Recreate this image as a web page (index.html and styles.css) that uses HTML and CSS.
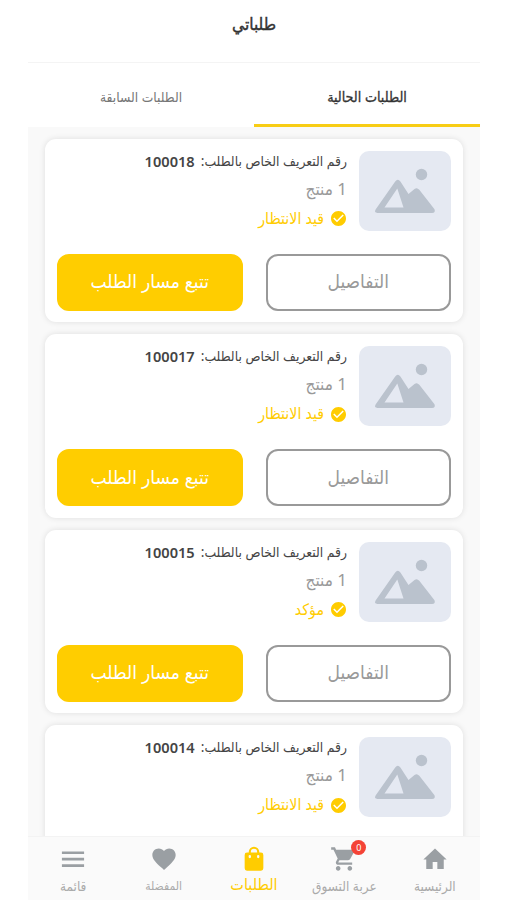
FILE: index.html
```html
<!DOCTYPE html>
<html lang="ar" dir="rtl">
<head>
  <meta charset="UTF-8" />
  <meta name="viewport" content="width=device-width, initial-scale=1.0">
  <title>طلباتي</title>
  <link rel="stylesheet" href="styles.css">
</head>
<body>
  <!-- Shared icons -->
  <svg class="icon-defs" width="0" height="0">
    <symbol id="icon-image" viewBox="0 0 92 80">
      <circle cx="62.5" cy="23.5" r="5.7" />
      <path fill-rule="evenodd" d="M16.6 58.6 36.2 30.5Q38.8 27 41.4 30.5L49.5 43 55.5 38Q58 36 60.3 38.7L75.5 58.3Q76.8 61.8 73 62H18.5Q14.8 61.8 16.600 58.600ZM25.500 56.500H44.500L38.300 37.500Z" />
    </symbol>
    <symbol id="icon-check" viewBox="2 2 20 20">
      <path d="M12 2C6.48 2 2 6.48 2 12s4.48 10 10 10 10-4.48 10-10S17.52 2 12 2zm-2 15-5-5 1.41-1.41L10 14.17l7.59-7.59L19 8l-9 9z" />
    </symbol>
  </svg>

  <div class="app">
    <header class="header">
      <h1 class="page-title">طلباتي</h1>
    </header>

    <!-- Tabs -->
    <div class="tabs">
      <div class="tab active">الطلبات الحالية</div>
      <div class="tab">الطلبات السابقة</div>
    </div>

    <!-- Orders -->
    <main class="orders">
      <div class="order-card">
        <div class="order-info">
          <div class="thumb"><svg><use href="#icon-image" /></svg></div>
          <div class="order-text">
            <div class="order-id"><span class="id-label">رقم التعريف الخاص بالطلب:</span><b>100018</b></div>
            <div class="order-count"><span class="num">1</span> منتج</div>
            <div class="order-status"><svg><use href="#icon-check" /></svg><span>قيد الانتظار</span></div>
          </div>
        </div>
        <div class="order-actions">
          <button class="btn btn-details">التفاصيل</button>
          <button class="btn btn-track">تتبع مسار الطلب</button>
        </div>
      </div>

      <div class="order-card">
        <div class="order-info">
          <div class="thumb"><svg><use href="#icon-image" /></svg></div>
          <div class="order-text">
            <div class="order-id"><span class="id-label">رقم التعريف الخاص بالطلب:</span><b>100017</b></div>
            <div class="order-count"><span class="num">1</span> منتج</div>
            <div class="order-status"><svg><use href="#icon-check" /></svg><span>قيد الانتظار</span></div>
          </div>
        </div>
        <div class="order-actions">
          <button class="btn btn-details">التفاصيل</button>
          <button class="btn btn-track">تتبع مسار الطلب</button>
        </div>
      </div>

      <div class="order-card">
        <div class="order-info">
          <div class="thumb"><svg><use href="#icon-image" /></svg></div>
          <div class="order-text">
            <div class="order-id"><span class="id-label">رقم التعريف الخاص بالطلب:</span><b>100015</b></div>
            <div class="order-count"><span class="num">1</span> منتج</div>
            <div class="order-status"><svg><use href="#icon-check" /></svg><span>مؤكد</span></div>
          </div>
        </div>
        <div class="order-actions">
          <button class="btn btn-details">التفاصيل</button>
          <button class="btn btn-track">تتبع مسار الطلب</button>
        </div>
      </div>

      <div class="order-card">
        <div class="order-info">
          <div class="thumb"><svg><use href="#icon-image" /></svg></div>
          <div class="order-text">
            <div class="order-id"><span class="id-label">رقم التعريف الخاص بالطلب:</span><b>100014</b></div>
            <div class="order-count"><span class="num">1</span> منتج</div>
            <div class="order-status"><svg><use href="#icon-check" /></svg><span>قيد الانتظار</span></div>
          </div>
        </div>
      </div>
    </main>

    <!-- Bottom navigation -->
    <nav class="bottom-nav">
      <a class="nav-item">
        <span class="nav-icon"><svg viewBox="0 0 24 24"><path d="M10 20.500v-6h4v6h5.500v-8H22L12 3 2 12.500h2.500v8z" /></svg></span>
        <span class="nav-label">الرئيسية</span>
      </a>
      <a class="nav-item">
        <span class="nav-icon">
          <svg viewBox="0 0 24 24"><path d="M7 18c-1.1 0-1.99.9-1.99 2S5.9 22 7 22s2-.9 2-2-.9-2-2-2zM1 2v2h2l3.6 7.59-1.35 2.45c-.16.28-.25.61-.25.96 0 1.1.9 2 2 2h12v-2H7.42c-.14 0-.25-.11-.25-.25l.03-.12.9-1.63h7.45c.75 0 1.41-.41 1.75-1.03l3.58-6.49c.08-.14.12-.31.12-.48 0-.55-.45-1-1-1H5.21l-.94-2H1zm16 16c-1.1 0-1.99.9-1.99 2s.89 2 1.99 2 2-.9 2-2-.9-2-2-2z" /></svg>
          <span class="badge">0</span>
        </span>
        <span class="nav-label">عربة التسوق</span>
      </a>
      <a class="nav-item active">
        <span class="nav-icon"><svg viewBox="0 0 24 24"><path fill-rule="evenodd" d="M7.5 6.5V6a4.5 4.5 0 0 1 9 0v.5H18a2 2 0 0 1 2 2V20a2 2 0 0 1-2 2H6a2 2 0 0 1-2-2V8.500a2 2 0 0 1 2-2zM9.300 6.500h5.400V6a2.700 2.700 0 0 0-5.400 0zM8.400 8.500a1 1 0 0 0-1 1v.8a1 1 0 0 0 2 0v-.8a1 1 0 0 0-1-1zm7.200 0a1 1 0 0 0-1 1v.8a1 1 0 0 0 2 0v-.8a1 1 0 0 0-1-1z" /></svg></span>
        <span class="nav-label">الطلبات</span>
      </a>
      <a class="nav-item">
        <span class="nav-icon"><svg viewBox="0 0 24 24"><path d="m12 21.350-1.450-1.320C5.400 15.360 2 12.280 2 8.500 2 5.420 4.420 3 7.500 3c1.740 0 3.410.810 4.500 2.090C13.090 3.810 14.760 3 16.500 3 19.580 3 22 5.420 22 8.500c0 3.780-3.400 6.860-8.550 11.540L12 21.350z" /></svg></span>
        <span class="nav-label label-favorites">المفضلة</span>
      </a>
      <a class="nav-item">
        <span class="nav-icon"><svg viewBox="0 0 24 24"><path d="M2.500 18.800h19v-2.300h-19v2.300zm0-5.500h19V11h-19v2.300zm0-7.800v2.300h19V5.500h-19z" /></svg></span>
        <span class="nav-label">قائمة</span>
      </a>
    </nav>
  </div>
</body>
</html>
```
FILE: styles.css
```css
/* Global Reset */
* { margin: 0; padding: 0; box-sizing: border-box; }
body {
  font-family: 'Noto Sans', 'DejaVu Sans Condensed', 'DejaVu Sans', sans-serif;
  background: #fff;
  overflow: hidden;
}
svg { display: block; fill: currentColor; }
.icon-defs { position: absolute; }
.app {
  width: 452px;
  height: 900px;
  margin: 0 27px 0 28px;
  display: flex;
  flex-direction: column;
}
/* Header */
.header {
  height: 63px;
  flex-shrink: 0;
  display: flex;
  justify-content: center;
  align-items: center;
  padding-bottom: 16px;
  border-bottom: 1px solid #f4f4f4;
}
.page-title {
  font-size: 17.2px;
  font-weight: 400;
  color: #333;
  -webkit-text-stroke: 0.4px #333;
}
/* Tabs */
.tabs { display: flex; height: 64px; flex-shrink: 0; }
.tab {
  flex: 1;
  display: flex;
  justify-content: center;
  align-items: center;
  padding-top: 6px;
  border-bottom: 3px solid transparent;
  font-size: 13.7px;
  color: #777;
}
.tab.active {
  font-size: 14.2px;
  color: #333;
  border-bottom-color: #f8cd15;
  -webkit-text-stroke: 0.3px #333;
}
/* Orders */
.orders {
  flex: 1;
  min-height: 0;
  overflow: hidden;
  padding: 11.5px 17px 0;
  background: #f9f9f9;
}
.order-card {
  height: 183.5px;
  margin-bottom: 12px;
  padding: 12px 12px 0;
  background: #fff;
  border-radius: 11px;
  box-shadow: 0 0 6px rgba(0,0,0,0.11);
}
.order-info { display: flex; gap: 12px; height: 80px; }
.thumb {
  width: 92px;
  height: 80px;
  border-radius: 10px;
  background: #e5e9f2;
  color: #bac2cd;
}
.thumb svg { width: 92px; height: 80px; }
.order-text { flex: 1; white-space: nowrap; }
.order-id {
  display: flex;
  gap: 6px;
  height: 20px;
  line-height: 20px;
  font-size: 13.8px;
  color: #444;
}
.order-id b { font-size: 14.6px; font-weight: 600; }
.order-count {
  height: 30px;
  margin-top: 3px;
  line-height: 30px;
  font-size: 17px;
  color: #999;
}
.order-status {
  display: flex;
  align-items: center;
  gap: 7px;
  height: 30px;
  padding-right: 1px;
  font-size: 15.8px;
  color: #ffcc00;
}
.order-status svg { width: 15px; height: 15px; }
.order-status span { margin-top: -2px; }
.order-actions { display: flex; gap: 23px; margin-top: 23px; }
.btn {
  flex: 1 1 50%;
  height: 57px;
  padding-bottom: 2px;
  border: 2px solid #999;
  border-radius: 12px;
  font-family: inherit;
  font-size: 19px;
}
.btn-details { background: #fff; color: #999; }
.btn-track { background: #ffcd00; border-color: #ffcd00; color: #fff; }
/* Bottom navigation */
.bottom-nav {
  display: flex;
  height: 64px;
  flex-shrink: 0;
  padding-top: 8px;
  background: #fafafa;
  border-top: 1px solid #f3f3f3;
}
.nav-item {
  flex: 1;
  display: flex;
  flex-direction: column;
  align-items: center;
  color: #9a9fa3;
}
.nav-icon { position: relative; }
.nav-icon svg { width: 28px; height: 28px; }
.nav-label {
  margin-top: 2px;
  line-height: 22px;
  font-size: 13.5px;
  color: #aaa;
  white-space: nowrap;
}
.label-favorites { font-size: 12px; }
.nav-item.active, .active .nav-label { color: #ffcc00; }
.active .nav-label { margin-top: 0; font-size: 16px; }
.badge {
  position: absolute;
  top: -5px;
  right: -8px;
  width: 15px;
  height: 15px;
  border-radius: 50%;
  background: #f44336;
  color: #fff;
  font-size: 9px;
  line-height: 15px;
  text-align: center;
}
```
